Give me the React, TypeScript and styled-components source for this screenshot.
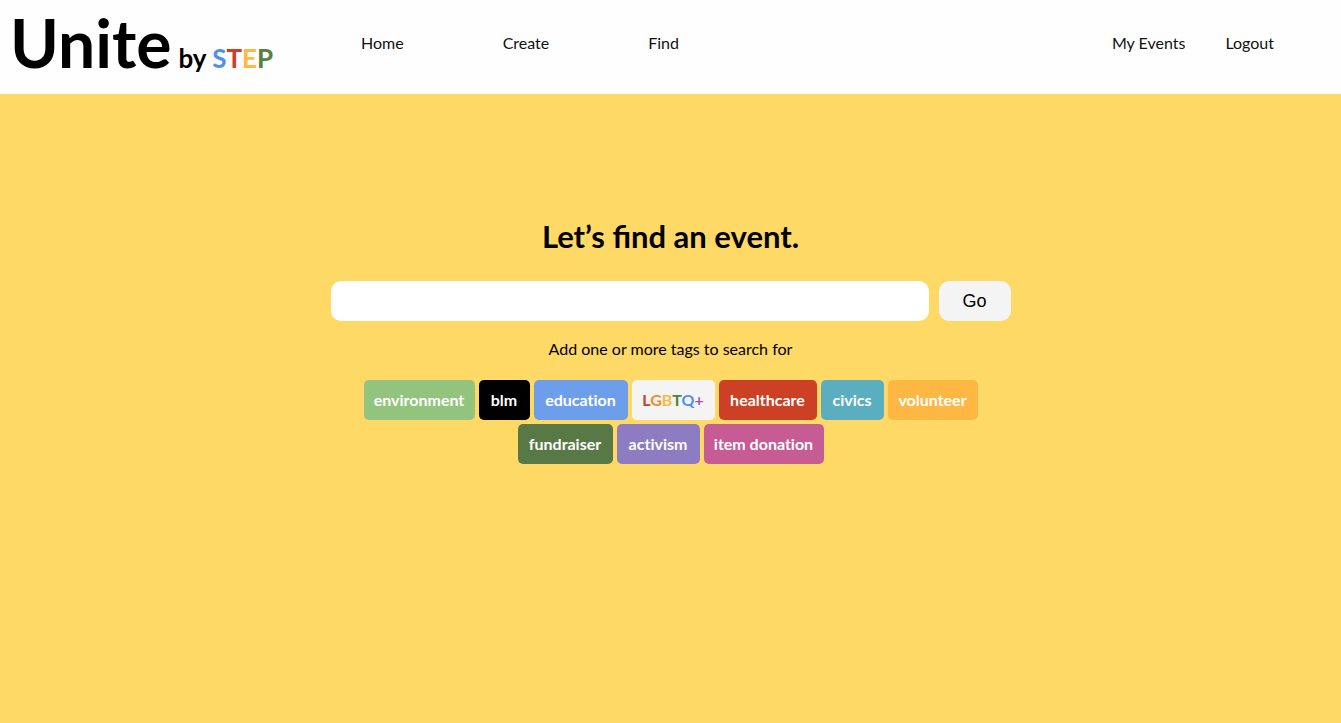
import React from "react";
import styled, { createGlobalStyle } from "styled-components";

const GlobalStyle = createGlobalStyle`
  * {
    box-sizing: border-box;
  }
  body {
    margin: 0;
    background: #fed966;
    color: #000;
    font-family: Lato, "Liberation Sans", sans-serif;
    font-size: 16px;
    line-height: 20px;
  }
`;

const Header = styled.header`
  display: flex;
  align-items: flex-start;
  height: 94px;
  padding: 0 67px 0 10px;
  background: #fefefe;
`;

const Logo = styled.a`
  flex: 0 0 351px;
  padding-top: 3px;
  color: #000;
  font-size: 66px;
  font-weight: 700;
  line-height: 80px;
  text-decoration: none;
  white-space: nowrap;
`;

const Byline = styled.span`
  margin-left: 7px;
  font-size: 26px;
`;

const Letter = styled.span<{ $color: string }>`
  color: ${(p) => p.$color};
`;

const Nav = styled.nav`
  display: flex;
  flex: 1;
  gap: 99px;
  padding-top: 33px;
`;

const Account = styled.div`
  display: flex;
  gap: 40px;
  margin-left: auto;
`;

const NavLink = styled.a`
  color: #111;
  text-decoration: none;
  white-space: nowrap;
`;

const Main = styled.main`
  display: flex;
  flex-direction: column;
  align-items: center;
  padding: 122px 20px 40px;
`;

const Title = styled.h1`
  margin: 0 0 25px;
  font-size: 31px;
  font-weight: 700;
  line-height: 40px;
`;

const Search = styled.form`
  display: flex;
  gap: 10px;
  width: 100%;
  max-width: 680px;
`;

const SearchBox = styled.input`
  flex: 1;
  min-width: 0;
  height: 40px;
  padding: 0 12px;
  border: 0;
  border-radius: 10px;
  background: #fff;
  font: inherit;
`;

const GoButton = styled.button`
  width: 72px;
  height: 40px;
  border: 0;
  border-radius: 10px;
  background: #f4f4f4;
  color: #000;
  font-family: "Liberation Sans", sans-serif;
  font-size: 18px;
`;

const Hint = styled.p`
  margin: 18px 0 21px;
`;

const Tags = styled.div`
  display: flex;
  flex-wrap: wrap;
  justify-content: center;
  gap: 4px;
  max-width: 640px;
`;

const Tag = styled.button<{ $color: string; $width: number }>`
  min-width: ${(p) => p.$width}px;
  height: 40px;
  padding: 0 10px;
  border: 0;
  border-radius: 5px;
  background: ${(p) => p.$color};
  color: #fff;
  font: inherit;
  font-weight: 700;
  font-variant-ligatures: none;
`;

const step = [
  ["S", "#4f8ff0"],
  ["T", "#d03d22"],
  ["E", "#fdb942"],
  ["P", "#55803f"],
];

const pride = [
  ["L", "#cc3f24"],
  ["G", "#ee8b2c"],
  ["B", "#fdb942"],
  ["T", "#4c8537"],
  ["Q", "#4f8ff0"],
  ["+", "#b44fae"],
];

const tags = [
  { name: "environment", color: "#93c47d", width: 111 },
  { name: "blm", color: "#000000", width: 51 },
  { name: "education", color: "#6d9eeb", width: 94 },
  { name: "LGBTQ+", color: "#f4f4f4", width: 83 },
  { name: "healthcare", color: "#cc4125", width: 98 },
  { name: "civics", color: "#5aaebf", width: 63 },
  { name: "volunteer", color: "#ffb743", width: 90 },
  { name: "fundraiser", color: "#587946", width: 95 },
  { name: "activism", color: "#8e7cc3", width: 83 },
  { name: "item donation", color: "#c75b94", width: 120 },
];

const Colored = ({ letters }: { letters: string[][] }) => (
  <>
    {letters.map(([char, color]) => (
      <Letter key={char} $color={color}>
        {char}
      </Letter>
    ))}
  </>
);

export default function App() {
  return (
    <>
      <GlobalStyle />
      <Header>
        <Logo href="#">
          Unite
          <Byline>
            by <Colored letters={step} />
          </Byline>
        </Logo>
        <Nav>
          <NavLink href="#home">Home</NavLink>
          <NavLink href="#create">Create</NavLink>
          <NavLink href="#find">Find</NavLink>
          <Account>
            <NavLink href="#events">My Events</NavLink>
            <NavLink href="#logout">Logout</NavLink>
          </Account>
        </Nav>
      </Header>
      <Main>
        <Title>Let’s find an event.</Title>
        <Search onSubmit={(e) => e.preventDefault()}>
          <SearchBox type="text" aria-label="Search events" />
          <GoButton type="submit">Go</GoButton>
        </Search>
        <Hint>Add one or more tags to search for</Hint>
        <Tags>
          {tags.map(({ name, color, width }) => (
            <Tag key={name} type="button" $color={color} $width={width}>
              {name === "LGBTQ+" ? <Colored letters={pride} /> : name}
            </Tag>
          ))}
        </Tags>
      </Main>
    </>
  );
}
